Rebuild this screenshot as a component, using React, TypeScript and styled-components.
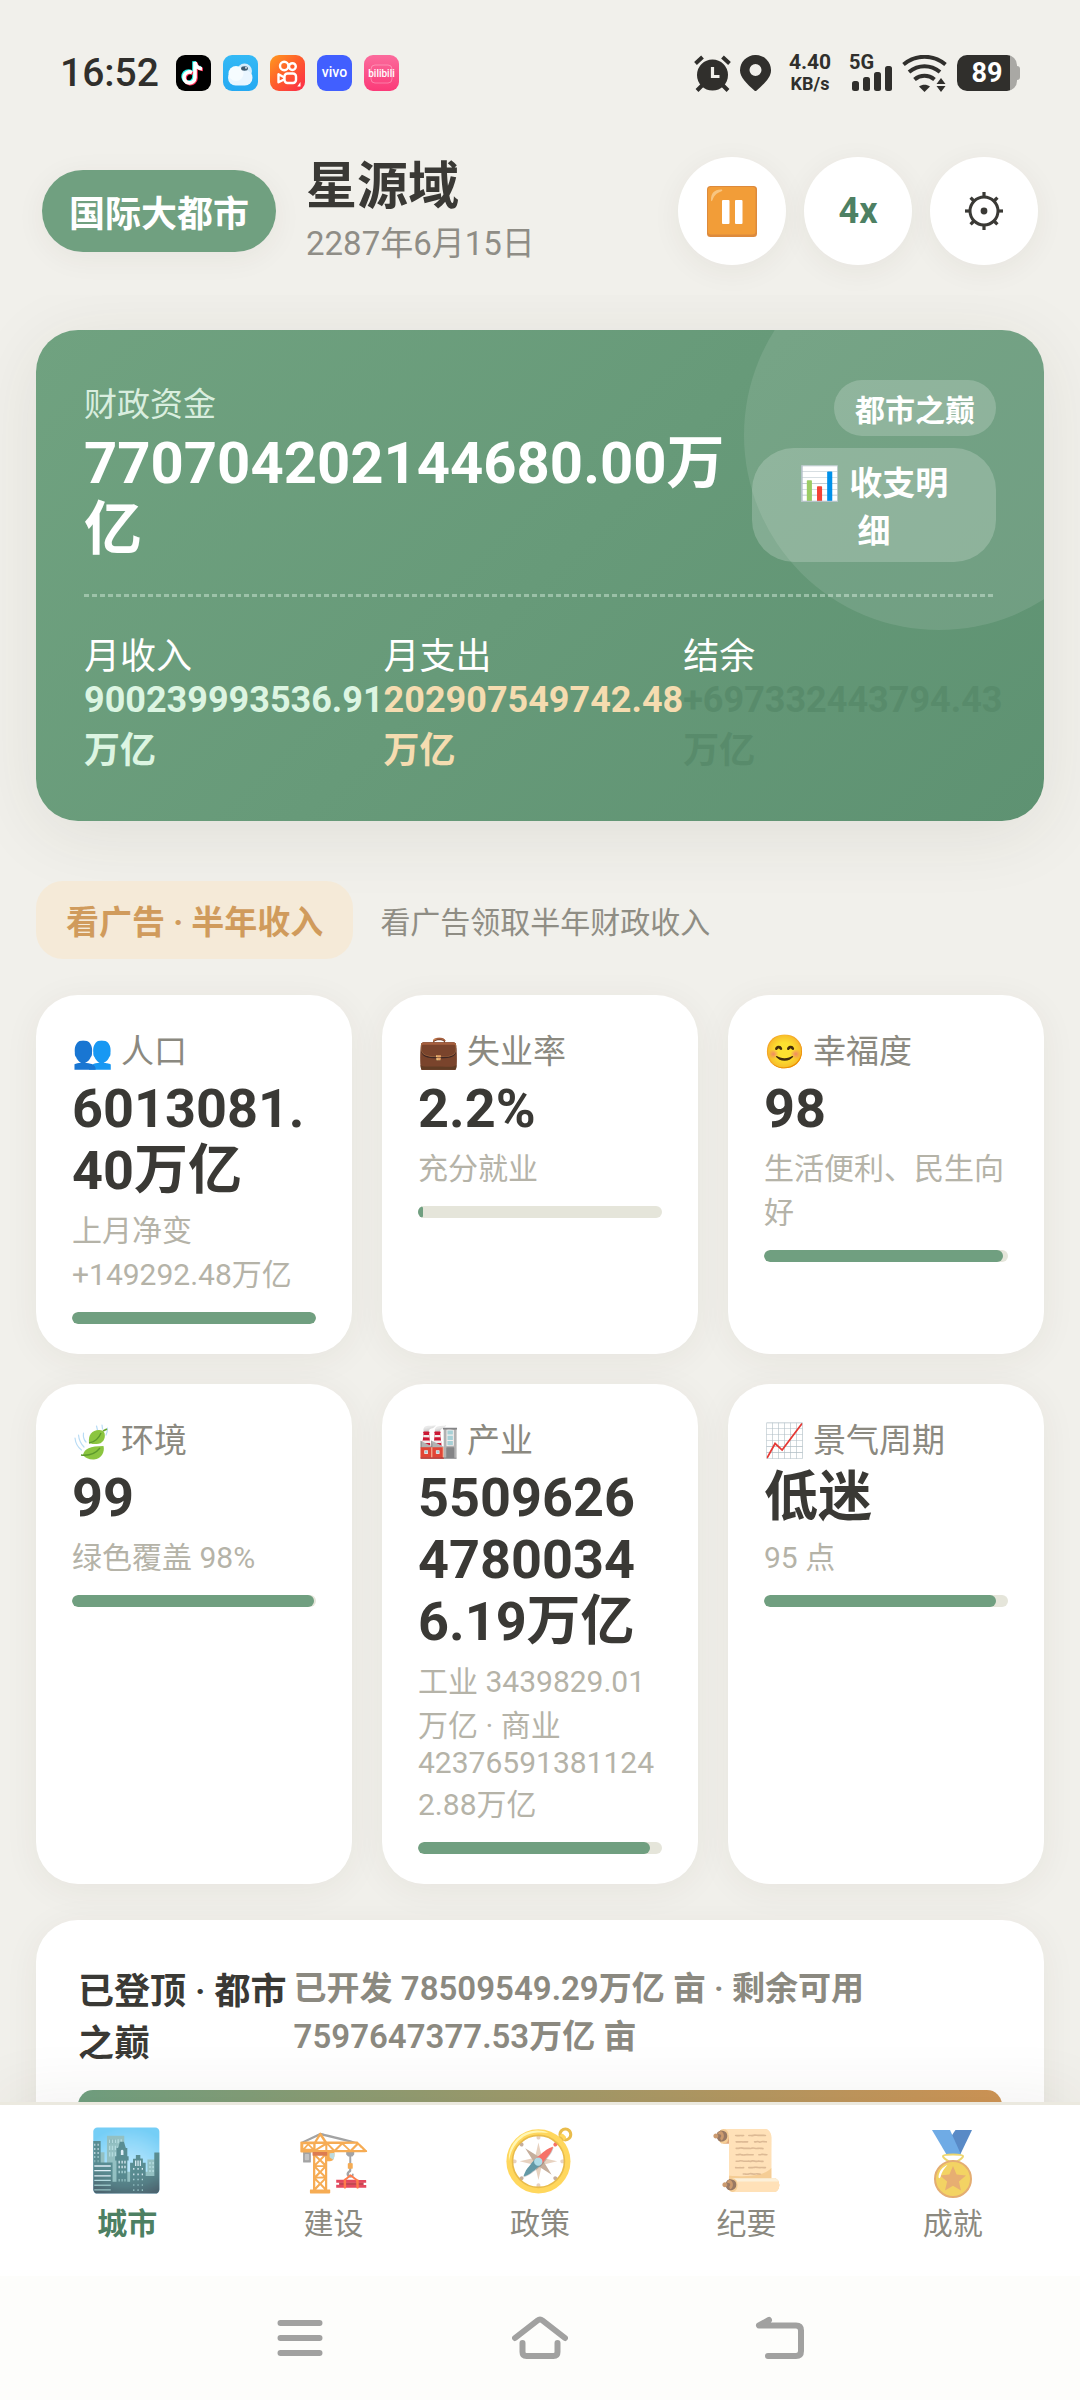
import React from "react";
import styled, { createGlobalStyle } from "styled-components";

const GlobalStyle = createGlobalStyle`
  *, *::before, *::after { box-sizing: border-box; }
  body {
    margin: 0;
    background: #f1f0eb;
    color: #3a3935;
    font-family: Roboto, "Noto Sans CJK SC", "Noto Color Emoji", sans-serif;
    line-height: normal;
  }
  button { font-family: inherit; border: 0; margin: 0; cursor: pointer; }
  h1, h2, p, dl, dt, dd { margin: 0; font-weight: inherit; }
  svg { display: block; flex: none; }
`;

const Shell = styled.div`
  display: flex;
  flex-direction: column;
  height: 100vh;
  overflow: hidden;
`;

/* ---------- status bar ---------- */

const StatusBar = styled.div`
  display: flex;
  flex: none;
  align-items: center;
  justify-content: space-between;
  height: 36px;
  margin-top: 55px;
  padding: 0 60px;
  color: #302f2c;
`;

const StatusGroup = styled.div<{ $gap: number }>`
  display: flex;
  align-items: center;
  gap: ${(p) => p.$gap}px;
`;

const Clock = styled.time`
  margin-right: 5px;
  font-size: 39px;
  font-weight: 500;
`;

const NetSpeed = styled.div`
  width: 60px;
  font-size: 21px;
  font-weight: 700;
  line-height: 21px;
  text-align: center;
`;

const NetUnit = styled.div`
  font-size: 18px;
`;

const Cellular = styled.div`
  display: flex;
  width: 44px;
  height: 36px;
  font-size: 20px;
  font-weight: 700;
  line-height: 15px;
`;

const CellularBars = styled.svg`
  margin-left: -22px;
`;

const Battery = styled.div`
  display: flex;
  align-items: center;
`;

const BatteryBody = styled.div`
  width: 60px;
  height: 36px;
  border-radius: 10px;
  background: linear-gradient(90deg, #302f2c 88%, #a9a8a4 88%);
  color: #fff;
  font-size: 27px;
  font-weight: 700;
  line-height: 36px;
  text-align: center;
`;

const BatteryTip = styled.div`
  width: 3px;
  height: 14px;
  border-radius: 0 3px 3px 0;
  background: #a9a8a4;
`;

/* ---------- header ---------- */

const Header = styled.header`
  display: flex;
  flex: none;
  align-items: center;
  padding: 66px 42px 30px;
`;

const TierPill = styled.div`
  padding: 15px 27px;
  border-radius: 41px;
  background: #70a080;
  box-shadow: 0 6px 30px rgba(60, 50, 30, 0.06);
  color: #fff;
  font-size: 36px;
  font-weight: 600;
`;

const CityInfo = styled.div`
  flex: 1;
  margin: 0 30px;
  min-width: 0;
`;

const CityName = styled.h1`
  font-size: 51px;
  font-weight: 700;
  line-height: 60px;
`;

const GameDate = styled.p`
  color: #8f8d86;
  font-size: 33px;
`;

const HeaderActions = styled.div`
  display: flex;
  gap: 18px;
`;

const RoundButton = styled.button`
  display: flex;
  align-items: center;
  justify-content: center;
  width: 108px;
  height: 108px;
  padding: 0;
  border-radius: 50%;
  background: #fff;
  box-shadow: 0 6px 30px rgba(60, 50, 30, 0.06);
  color: #4d8063;
  font-size: 36px;
  font-weight: 700;
`;

/* ---------- scrolling content ---------- */

const Main = styled.main`
  flex: 1;
  min-height: 0;
  padding: 35px 36px;
  overflow-y: auto;
  scrollbar-width: none;
`;

const Hero = styled.section`
  position: relative;
  padding: 48px;
  border-radius: 42px;
  overflow: hidden;
  background: linear-gradient(135deg, #70a280 0%, #5e9272 100%);
  color: #fff;

  &::before {
    content: "";
    position: absolute;
    top: -90px;
    right: -90px;
    width: 390px;
    height: 390px;
    border-radius: 50%;
    background: rgba(255, 255, 255, 0.1);
  }
`;

const HeroShadow = styled.div`
  border-radius: 42px;
  box-shadow: 0 12px 72px rgba(60, 50, 30, 0.09);
`;

const HeroTop = styled.div`
  position: relative;
  display: flex;
  align-items: flex-end;
`;

const Funds = styled.div`
  flex: 1;
  min-width: 0;
`;

const FundsLabel = styled.p`
  color: #d9eedf;
  font-size: 33px;
`;

const FundsValue = styled.p`
  margin-top: 4px;
  font-size: 58px;
  font-weight: 700;
  line-height: 66px;
`;

const HeroSide = styled.div`
  display: flex;
  flex: 0 0 244px;
  flex-direction: column;
  align-items: flex-end;
  gap: 12px;
`;

const RankChip = styled.span`
  padding: 6px 21px;
  border-radius: 28px;
  background: rgba(255, 255, 255, 0.2);
  font-size: 30px;
  font-weight: 600;
`;

const LedgerButton = styled.button`
  width: 100%;
  padding: 9px 36px;
  border-radius: 42px;
  background: rgba(255, 255, 255, 0.2);
  color: #fff;
  font-size: 33px;
  font-weight: 700;
`;

const DashedRule = styled.div`
  height: 3px;
  margin: 32px 0 30px;
  background: repeating-linear-gradient(90deg, rgba(225, 245, 230, 0.42) 0 5px, transparent 5px 8px);
`;

const FlowList = styled.dl`
  position: relative;
  display: flex;
  justify-content: space-between;
  font-size: 36px;
`;

const FlowItem = styled.div<{ $tone: string }>`
  dd {
    color: ${(p) => p.$tone};
    font-weight: 700;
  }
`;

const AdRow = styled.div`
  display: flex;
  align-items: center;
  gap: 27px;
  margin: 60px 0 36px;
`;

const AdButton = styled.button`
  padding: 15px 30px;
  border-radius: 27px;
  background: #f5ead8;
  color: #d09b5c;
  font-size: 33px;
  font-weight: 700;
`;

const AdHint = styled.p`
  color: #8f8d84;
  font-size: 30px;
`;

const StatGrid = styled.div`
  display: grid;
  grid-template-columns: repeat(3, minmax(0, 1fr));
  gap: 30px;
`;

const Card = styled.section`
  border-radius: 42px;
  background: #fff;
  box-shadow: 0 6px 36px rgba(60, 50, 30, 0.06);
`;

const StatCard = styled(Card)`
  padding: 30px 36px;
  overflow-wrap: anywhere;
`;

const StatLabel = styled.h2`
  display: flex;
  gap: 8px;
  height: 48px;
  color: #8b8980;
  font-size: 33px;
`;

const StatIcon = styled.span`
  padding-top: 7px;
`;

const StatValue = styled.p`
  margin: 5px 0 4px;
  font-size: 54px;
  font-weight: 700;
  line-height: 62px;
`;

const StatHint = styled.p`
  color: #b5b3a8;
  font-size: 30px;
`;

const Track = styled.div`
  height: 12px;
  margin-top: 18px;
  border-radius: 6px;
  overflow: hidden;
  background: #e5e5da;
`;

const Fill = styled.div`
  height: 100%;
  border-radius: 6px;
  background: #709f80;
`;

const LandCard = styled(Card)`
  margin-top: 36px;
  padding: 42px;
`;

const LandHead = styled.div`
  display: flex;
  justify-content: space-between;
`;

const LandTitle = styled.h2`
  font-size: 36px;
  font-weight: 600;
`;

const LandDetail = styled.p`
  color: #8b8980;
  font-size: 33px;
  font-weight: 600;
`;

const LandBar = styled.div`
  height: 30px;
  margin-top: 24px;
  border-radius: 15px;
  background: linear-gradient(90deg, #70a080, #cf9555);
`;

/* ---------- bottom bars ---------- */

const TabBar = styled.nav`
  position: relative;
  display: flex;
  flex: none;
  padding: 0 24px;
  border-top: 3px solid #ebe9df;
  background: #fff;
  box-shadow: 0 -12px 60px rgba(60, 50, 30, 0.06);
`;

const Tab = styled.button<{ $active?: boolean }>`
  flex: 1;
  padding: 21px 0 33px;
  background: none;
  color: ${(p) => (p.$active ? "#4d8063" : "#8b8980")};
  font-size: 30px;
  font-weight: ${(p) => (p.$active ? 700 : 400)};
`;

const TabIcon = styled.span<{ $active?: boolean }>`
  display: flex;
  justify-content: center;
  height: 66px;
  margin-bottom: 7px;
  font-size: 60px;
  font-weight: 400;
  line-height: 70px;
  opacity: ${(p) => (p.$active ? 0.9 : 0.75)};
`;

const SystemBar = styled.div`
  position: relative;
  display: flex;
  flex: none;
  align-items: center;
  justify-content: center;
  gap: 184px;
  height: 124px;
  background: #fdfdfb;
`;

const SystemButton = styled.button`
  padding: 0;
  background: none;
  color: #a1a1a0;
`;

/* ---------- icons ---------- */

const TikTokIcon = () => (
  <svg width="35" height="36" viewBox="0 0 35 36">
    <rect width="35" height="36" rx="9" fill="#000" />
    <g fill="none" strokeWidth="3.6">
      <path d="M16 17.500a5.500 5.500 0 1 0 3 5V7c.6 4 3.200 6.500 7 6.700" stroke="#25f4ee" transform="translate(-1 -.8)" />
      <path d="M16 17.500a5.500 5.500 0 1 0 3 5V7c.6 4 3.200 6.500 7 6.700" stroke="#fe2c55" transform="translate(1 .8)" />
      <path d="M16 17.500a5.500 5.500 0 1 0 3 5V7c.6 4 3.200 6.500 7 6.700" stroke="#fff" />
    </g>
  </svg>
);

const CloudIcon = () => (
  <svg width="35" height="36" viewBox="0 0 35 36">
    <defs>
      <linearGradient id="cloud-bg" x2="0" y2="1">
        <stop stopColor="#34b9f5" />
        <stop offset="1" stopColor="#25a9f2" />
      </linearGradient>
    </defs>
    <rect width="35" height="36" rx="9" fill="url(#cloud-bg)" />
    <circle cx="21.500" cy="16" r="7.500" fill="#d3ecfb" />
    <rect x="5" y="15" width="24.500" height="15.500" rx="7.700" fill="#eaf6ff" />
    <circle cx="13" cy="18.500" r="7.500" fill="#f6fcff" />
    <ellipse cx="21.500" cy="13.500" rx="3.400" ry="2.200" fill="#3d5a70" />
    <circle cx="23" cy="12.800" r=".9" fill="#fff" />
  </svg>
);

const KuaishouIcon = () => (
  <svg width="35" height="36" viewBox="0 0 35 36">
    <defs>
      <linearGradient id="ks-bg" x2="1" y2="1">
        <stop stopColor="#ff9a1f" />
        <stop offset=".5" stopColor="#ff5a2c" />
        <stop offset="1" stopColor="#fb2a4b" />
      </linearGradient>
    </defs>
    <rect width="35" height="36" rx="9" fill="url(#ks-bg)" />
    <g fill="none" stroke="#fff" strokeWidth="2.400" strokeLinejoin="round">
      <circle cx="14.200" cy="11" r="4.200" />
      <circle cx="22.400" cy="11.600" r="3.400" />
      <rect x="14.500" y="18.500" width="11.500" height="9.500" rx="3" />
      <path d="M14.500 22.500l-6-3.200v8l6-3" />
    </g>
    <path d="M30.500 27v4.500h-3.200z" fill="#fff" />
  </svg>
);

const AppText = styled.text`
  font-family: Roboto, sans-serif;
  font-weight: 500;
  text-anchor: middle;
`;

const VivoIcon = () => (
  <svg width="35" height="36" viewBox="0 0 35 36">
    <rect width="35" height="36" rx="9" fill="#415fff" />
    <AppText x="17.500" y="22" fontSize="14" fill="#fff">vivo</AppText>
  </svg>
);

const BilibiliIcon = () => (
  <svg width="35" height="36" viewBox="0 0 35 36">
    <defs>
      <linearGradient id="bili-bg" x2="0" y2="1">
        <stop stopColor="#fb6b9c" />
        <stop offset="1" stopColor="#fb3a78" />
      </linearGradient>
    </defs>
    <rect width="35" height="36" rx="9" fill="url(#bili-bg)" />
    <rect x="7" y="10" width="21" height="18" rx="4" fill="none" stroke="#fff" strokeOpacity=".3" />
    <AppText x="17.500" y="22" fontSize="10" fill="#fff">bilibili</AppText>
  </svg>
);

const AlarmIcon = () => (
  <svg width="37" height="37" viewBox="0 0 37 37">
    <g stroke="#302f2c" strokeWidth="4">
      <path d="M1.500 8.500l7-6.500M28.500 2l7 6.500M8.500 30l-5.500 5.500M28.500 30l5.500 5.500" fill="none" />
    </g>
    <circle cx="18.500" cy="20" r="15.500" fill="#302f2c" />
    <path d="M18.500 12v9.500h7" fill="none" stroke="#f1f0eb" strokeWidth="3.200" />
  </svg>
);

const PinIcon = () => (
  <svg width="31" height="36" viewBox="0 0 31 36">
    <path
      d="M15.500 0A15.300 15.300 0 0 0 0 15.500C0 22.500 7 29 15.500 36.500 24 29 31 22.500 31 15.500A15.300 15.300 0 0 0 15.500 0zm0 9a6 6 0 1 1 0 12 6 6 0 0 1 0-12z"
      fill="#302f2c"
    />
  </svg>
);

const WifiIcon = () => (
  <svg width="46" height="37" viewBox="0 0 46 37">
    <g fill="none" stroke="#302f2c" strokeWidth="4">
      <path d="M1.500 9.500C14-.8 31-.8 43.500 9.500" />
      <path d="M7 17c9.500-7.800 21.500-7.800 31 0" />
      <path d="M12.500 24.500c6-5 14-5 20 0" />
    </g>
    <path d="M17 31.500c3.500-2.500 7.500-2.500 11 0l-5.500 5.500z" fill="#302f2c" />
    <path d="M34.500 29l4.500-6 4.500 6zM34.500 31h9L39 37z" fill="#302f2c" />
  </svg>
);

const GearIcon = () => (
  <svg width="40" height="40" viewBox="-20 -20 40 40">
    <circle r="14" fill="none" stroke="#3a3935" strokeWidth="3" />
    <circle r="3.400" fill="#3a3935" />
    {[0, 45, 90, 135, 180, 225, 270, 315].map((a) => (
      <path key={a} d="M0-14.500V-19" stroke="#3a3935" strokeWidth="3.200" transform={`rotate(${a})`} />
    ))}
  </svg>
);

const PauseIcon = () => (
  <svg width="50" height="51" viewBox="0 0 50 51">
    <rect width="50" height="51" rx="3.500" fill="#dd8a3c" />
    <rect x="1" y="1" width="47.500" height="47.500" rx="3" fill="#f29d38" />
    <path d="M4 14C4 7 7 4 14 3.500c2 0 1.500 1.500 0 2C9 7.500 7.500 9 5.500 14 5 15.500 4 15.500 4 14z" fill="#f8c580" />
    <rect x="15" y="14" width="7.500" height="24" rx="1" fill="#fff" />
    <rect x="28" y="14" width="7.500" height="24" rx="1" fill="#fff" />
  </svg>
);

const LeavesIcon = () => (
  <svg width="41" height="41" viewBox="0 -4 41 41">
    <g fill="none" stroke="#b9dcf5" strokeWidth="1.200" strokeLinecap="round">
      <path d="M3 13c.5 5 2.500 9 6.500 12M6.500 10c.5 5 2.500 9 5.500 12M11.500 8c-.5 4 .5 7 2.500 9" />
      <path d="M24.500 1l1 4M30 0l.5 4M35.500 3c0 3-.5 5-1.500 7" />
    </g>
    <path d="M17 18C16 10 20 5 27 5c3 0 4.500 1 5.500 3 1.500 6-2 11-8 11-3 0-5 0-7.500-1z" fill="#8bc53f" />
    <path d="M17 18c6-1 10-5 12-10" fill="none" stroke="#5d9a2c" strokeWidth="1.300" />
    <path d="M31 6l4-2" stroke="#6aa52f" strokeWidth="1.600" />
    <path d="M11 30c1-6 7-9 20.500-9 1.500 6-2 13-9.500 13.500-5 .3-8.500-1.500-11-4.500z" fill="#8bc53f" />
    <path d="M9 30c8 1 15-2 19-7" fill="none" stroke="#5d9a2c" strokeWidth="1.300" />
  </svg>
);

const MedalIcon = () => (
  <svg width="66" height="72" viewBox="0 0 66 72">
    <path d="M52 4H35.500L26 18l6 11h8z" fill="#2264b4" />
    <path d="M12 4h18l11 24.500H26.500z" fill="#3f8fdd" />
    <path d="M23 30c0-2 20-2 20 0 0 3-5 4-6 6h-8c-1-2-6-3-6-6z" fill="none" stroke="#e8c93e" strokeWidth="2" />
    <circle cx="33" cy="53" r="18" fill="#f0c52f" stroke="#db9243" strokeWidth="2" />
    <path d="M33 40l3.600 8.600 9.400.8-7.100 6.100 2.100 9.100-8-4.900-8 4.900 2.100-9.100-7.100-6.100 9.400-.8z" fill="#df9344" />
    <path d="M18.500 51c.5-6 4-10 9-12-3 3-6 7-7 12-.5 1.500-2 1.500-2 0z" fill="#fff" />
  </svg>
);

const MenuGlyph = () => (
  <svg width="56" height="44" viewBox="0 0 56 44">
    <path d="M8.500 7h39M8.500 22h39M8.500 37h39" stroke="currentColor" strokeWidth="6" strokeLinecap="round" />
  </svg>
);

const HomeGlyph = () => (
  <svg width="56" height="44" viewBox="0 0 56 44" fill="none" stroke="currentColor" strokeWidth="6" strokeLinecap="round" strokeLinejoin="round">
    <path d="M3 22L25.500 4.500q2.500-2 5 0L53 22" />
    <path d="M10.500 27v9q0 4 4 4h27q4 0 4-4v-9" />
  </svg>
);

const BackGlyph = () => (
  <svg width="56" height="44" viewBox="0 0 56 44" fill="none" stroke="currentColor" strokeWidth="6" strokeLinecap="round" strokeLinejoin="round">
    <path d="M17 4L7 9.500h37q5 0 5 5V35q0 5-5 5H16" />
  </svg>
);

/* ---------- data ---------- */

const flows = [
  { label: "月收入", value: "900239993536.91万亿", tone: "#dcf5e2" },
  { label: "月支出", value: "202907549742.48万亿", tone: "#f5dcb0" },
  { label: "结余", value: "+697332443794.43万亿", tone: "#588b6b" },
];

const stats = [
  { icon: "👥", name: "人口", value: "6013081.40万亿", hint: "上月净变 +149292.48万亿", percent: 100 },
  { icon: "💼", name: "失业率", value: "2.2%", hint: "充分就业", percent: 2.2 },
  { icon: "😊", name: "幸福度", value: "98", hint: "生活便利、民生向好", percent: 98 },
  { icon: <LeavesIcon />, name: "环境", value: "99", hint: "绿色覆盖 98%", percent: 99 },
  {
    icon: "🏭",
    name: "产业",
    value: "550962647800346.19万亿",
    hint: "工业 3439829.01万亿 · 商业 423765913811242.88万亿",
    percent: 95,
  },
  { icon: "📈", name: "景气周期", value: "低迷", hint: "95 点", percent: 95 },
];

const tabs = [
  { icon: "🏙️", name: "城市" },
  { icon: "🏗️", name: "建设" },
  { icon: "🧭", name: "政策" },
  { icon: "📜", name: "纪要" },
  { icon: <MedalIcon />, name: "成就" },
];

export default function App() {
  return (
    <Shell lang="zh-CN">
      <GlobalStyle />
      <StatusBar>
        <StatusGroup $gap={12}>
          <Clock>16:52</Clock>
          <TikTokIcon />
          <CloudIcon />
          <KuaishouIcon />
          <VivoIcon />
          <BilibiliIcon />
        </StatusGroup>
        <StatusGroup $gap={9}>
          <AlarmIcon />
          <PinIcon />
          <NetSpeed>
            <div>4.40</div>
            <NetUnit>KB/s</NetUnit>
          </NetSpeed>
          <Cellular>
            5G
            <CellularBars width="41" height="36" viewBox="0 0 41 36" fill="#302f2c">
              <rect x="0" y="26" width="7" height="10" rx="2.500" />
              <rect x="11" y="22" width="7" height="14" rx="2.500" />
              <rect x="22" y="17" width="7" height="19" rx="2.500" />
              <rect x="33" y="11" width="7" height="25" rx="2.500" />
            </CellularBars>
          </Cellular>
          <WifiIcon />
          <Battery>
            <BatteryBody>89</BatteryBody>
            <BatteryTip />
          </Battery>
        </StatusGroup>
      </StatusBar>

      <Header>
        <TierPill>国际大都市</TierPill>
        <CityInfo>
          <CityName>星源域</CityName>
          <GameDate>2287年6月15日</GameDate>
        </CityInfo>
        <HeaderActions>
          <RoundButton aria-label="暂停">
            <PauseIcon />
          </RoundButton>
          <RoundButton>4x</RoundButton>
          <RoundButton aria-label="设置">
            <GearIcon />
          </RoundButton>
        </HeaderActions>
      </Header>

      <Main>
        <HeroShadow>
          <Hero>
            <HeroTop>
              <Funds>
                <FundsLabel>财政资金</FundsLabel>
                <FundsValue>770704202144680.00万亿</FundsValue>
              </Funds>
              <HeroSide>
                <RankChip>都市之巅</RankChip>
                <LedgerButton>📊 收支明细</LedgerButton>
              </HeroSide>
            </HeroTop>
            <DashedRule />
            <FlowList>
              {flows.map((f) => (
                <FlowItem key={f.label} $tone={f.tone}>
                  <dt>{f.label}</dt>
                  <dd>{f.value}</dd>
                </FlowItem>
              ))}
            </FlowList>
          </Hero>
        </HeroShadow>

        <AdRow>
          <AdButton>看广告 · 半年收入</AdButton>
          <AdHint>看广告领取半年财政收入</AdHint>
        </AdRow>

        <StatGrid>
          {stats.map((s) => (
            <StatCard key={s.name}>
              <StatLabel>
                <StatIcon>{s.icon}</StatIcon>
                <span>{s.name}</span>
              </StatLabel>
              <StatValue>{s.value}</StatValue>
              <StatHint>{s.hint}</StatHint>
              <Track>
                <Fill style={{ width: `${s.percent}%` }} />
              </Track>
            </StatCard>
          ))}
        </StatGrid>

        <LandCard>
          <LandHead>
            <LandTitle>已登顶 · 都市之巅</LandTitle>
            <LandDetail>已开发 78509549.29万亿 亩 · 剩余可用 7597647377.53万亿 亩</LandDetail>
          </LandHead>
          <LandBar />
        </LandCard>
      </Main>

      <TabBar>
        {tabs.map((t, i) => (
          <Tab key={t.name} $active={i === 0}>
            <TabIcon $active={i === 0}>{t.icon}</TabIcon>
            {t.name}
          </Tab>
        ))}
      </TabBar>
      <SystemBar>
        <SystemButton aria-label="最近任务">
          <MenuGlyph />
        </SystemButton>
        <SystemButton aria-label="主屏幕">
          <HomeGlyph />
        </SystemButton>
        <SystemButton aria-label="返回">
          <BackGlyph />
        </SystemButton>
      </SystemBar>
    </Shell>
  );
}
